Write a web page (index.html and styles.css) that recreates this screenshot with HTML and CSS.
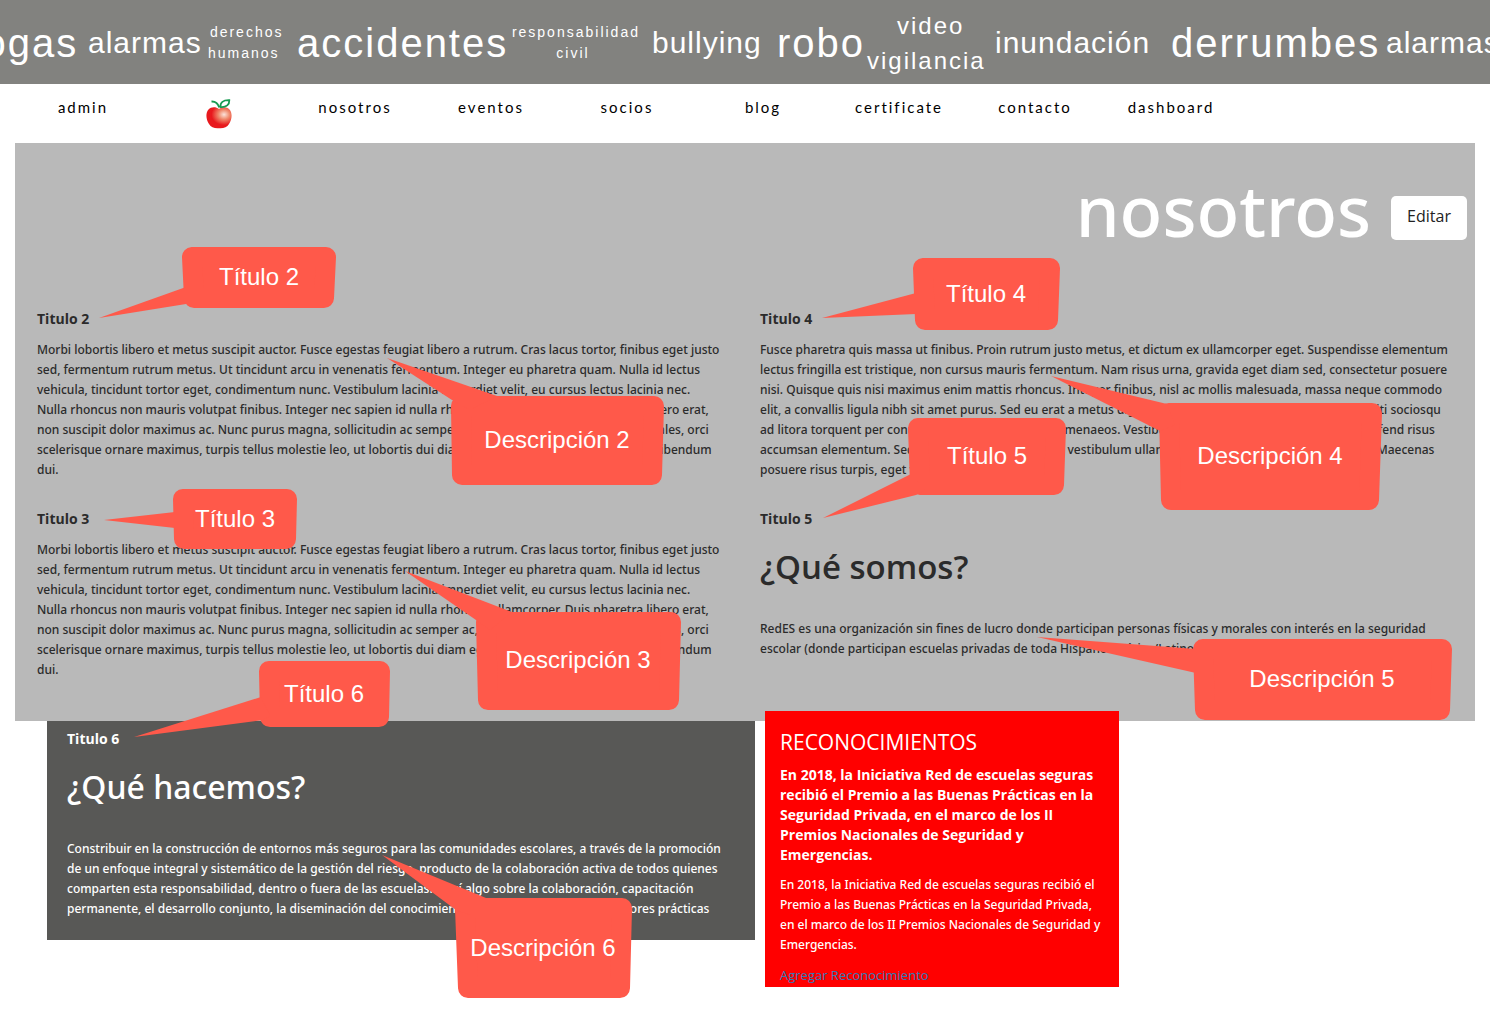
FILE: index.html
```html
<!DOCTYPE html>
<html lang="es">
<head>
<meta charset="utf-8">
<title>nosotros</title>
<meta name="viewport" content="width=device-width, initial-scale=1">
<link rel="stylesheet" href="styles.css">
</head>
<body>
<div class="ticker">
  <span class="word word-lg">drogas</span>
  <span class="word word-md">alarmas</span>
  <span class="word word-sm">&nbsp;derechos<br>humanos</span>
  <span class="word word-lg">accidentes</span>
  <span class="word word-sm">&nbsp;responsabilidad<br>civil</span>
  <span class="word word-md">bullying</span>
  <span class="word word-lg">robo</span>
  <span class="word word-duo">&nbsp;video<br>vigilancia</span>
  <span class="word word-md">inundación</span>
  <span class="word word-lg">derrumbes</span>
  <span class="word word-md">alarmas</span>
</div>

<nav class="nav">
  <a href="#">admin</a>
  <a href="#" aria-label="Inicio">
    <svg class="apple" width="26" height="30" viewBox="0 0 26 30">
      <defs>
        <radialGradient id="skin" cx="0.7" cy="0.35" r="0.5">
          <stop offset="0" stop-color="#fbe3da"/>
          <stop offset="0.45" stop-color="#f08a6c"/>
          <stop offset="1" stop-color="#e8191d"/>
        </radialGradient>
      </defs>
      <path d="M13 10C10 7.500 5 7.500 2.500 10.500C-.5 14-.2 20 3 25C5 28.500 8.500 29.500 13 29.200C17.500 29.500 21 28.500 23 25C26.200 20 26.500 14 23.500 10.500C21 7.500 16 7.500 13 10Z" fill="url(#skin)"/>
      <path d="M5.500 2.500C9.500 2.300 12 4.500 13.200 8.500M14.500 8C14 3.500 17 1 23.300 1.200C23.500 5.500 20.500 8.500 14.500 8Z" fill="none" stroke="#179a50" stroke-width="1.800"/>
    </svg>
  </a>
  <a href="#">nosotros</a>
  <a href="#">eventos</a>
  <a href="#">socios</a>
  <a href="#">blog</a>
  <a href="#">certificate</a>
  <a href="#">contacto</a>
  <a href="#">dashboard</a>
</nav>

<main class="page">
  <section class="about">
    <header class="about-head">
      <h1>nosotros</h1>
      <button type="button" class="edit">Editar</button>
    </header>
    <div class="columns">
      <article class="block">
        <h3>Titulo 2</h3>
        <p>Morbi lobortis libero et metus suscipit auctor. Fusce egestas feugiat libero a rutrum. Cras lacus tortor, finibus eget justo<br>
        sed, fermentum rutrum metus. Ut tincidunt arcu in venenatis fermentum. Integer eu pharetra quam. Nulla id lectus<br>
        vehicula, tincidunt tortor eget, condimentum nunc. Vestibulum lacinia imperdiet velit, eu cursus lectus lacinia nec.<br>
        Nulla rhoncus non mauris volutpat finibus. Integer nec sapien id nulla rhoncus ullamcorper. Duis pharetra libero erat,<br>
        non suscipit dolor maximus ac. Nunc purus magna, sollicitudin ac semper ac, dignissim et nunc. Nunc ut sodales, orci<br>
        scelerisque ornare maximus, turpis tellus molestie leo, ut lobortis dui diam eget tortor. Aenean nec nisi sed bibendum<br>
        dui.</p>
      </article>
      <article class="block">
        <h3>Titulo 4</h3>
        <p>Fusce pharetra quis massa ut finibus. Proin rutrum justo metus, et dictum ex ullamcorper eget. Suspendisse elementum<br>
        lectus fringilla est tristique, non cursus mauris fermentum. Nam risus urna, gravida eget diam sed, consectetur posuere<br>
        nisi. Quisque quis nisi maximus enim mattis rhoncus. Integer finibus, nisl ac mollis malesuada, massa neque commodo<br>
        elit, a convallis ligula nibh sit amet purus. Sed eu erat a metus dignissim tincidunt in ut nisl. Class aptent taciti sociosqu<br>
        ad litora torquent per conubia nostra, per inceptos himenaeos. Vestibulum at purus nec lectus in cursus eleifend risus<br>
        accumsan elementum. Sed congue nisi sit amet justo vestibulum ullamcorper. Duis eget nunc a elit rutrum. Maecenas<br>
        posuere risus turpis, eget volutpat nunc iaculis a.</p>
      </article>
      <article class="block">
        <h3>Titulo 3</h3>
        <p>Morbi lobortis libero et metus suscipit auctor. Fusce egestas feugiat libero a rutrum. Cras lacus tortor, finibus eget justo<br>
        sed, fermentum rutrum metus. Ut tincidunt arcu in venenatis fermentum. Integer eu pharetra quam. Nulla id lectus<br>
        vehicula, tincidunt tortor eget, condimentum nunc. Vestibulum lacinia imperdiet velit, eu cursus lectus lacinia nec.<br>
        Nulla rhoncus non mauris volutpat finibus. Integer nec sapien id nulla rhoncus ullamcorper. Duis pharetra libero erat,<br>
        non suscipit dolor maximus ac. Nunc purus magna, sollicitudin ac semper ac, dignissim et nunc. Nunc ut sodales, orci<br>
        scelerisque ornare maximus, turpis tellus molestie leo, ut lobortis dui diam eget tortor. Aenean nec nisi sed bibendum<br>
        dui.</p>
      </article>
      <article class="block">
        <h3>Titulo 5</h3>
        <h2>¿Qué somos?</h2>
        <p>RedES es una organización sin fines de lucro donde participan personas físicas y morales con interés en la seguridad<br>
        escolar (donde participan escuelas privadas de toda Hispanoamérica/Latinoamérica).</p>
      </article>
    </div>
  </section>

  <div class="lower">
    <section class="work">
      <h3>Titulo 6</h3>
      <h2>¿Qué hacemos?</h2>
      <p>Constribuir en la construcción de entornos más seguros para las comunidades escolares, a través de la promoción<br>
      de un enfoque integral y sistemático de la gestión del riesgo, producto de la colaboración activa de todos quienes<br>
      comparten esta responsabilidad, dentro o fuera de las escuelas. Aquí algo sobre la colaboración, capacitación<br>
      permanente, el desarrollo conjunto, la diseminación del conocimiento y la implantación de las mejores prácticas</p>
    </section>
    <section class="awards">
      <h2>RECONOCIMIENTOS</h2>
      <p class="lead">En 2018, la Iniciativa Red de escuelas seguras<br>recibió el Premio a las Buenas Prácticas en la<br>Seguridad Privada, en el marco de los II<br>Premios Nacionales de Seguridad y<br>Emergencias.</p>
      <p>En 2018, la Iniciativa Red de escuelas seguras recibió el<br>Premio a las Buenas Prácticas en la Seguridad Privada,<br>en el marco de los II Premios Nacionales de Seguridad y<br>Emergencias.</p>
      <a href="#">Agregar Reconocimiento</a>
    </section>
  </div>
</main>

<svg class="notes" width="1490" height="1019" viewBox="0 0 1490 1019">
  <g class="bubble">
    <path d="M192 257H326L324 298H194Z"/>
    <path d="M461 406H654L652 475H462Z"/>
    <path d="M923 268H1050L1048 320H925Z"/>
    <path d="M918 428H1056L1054 485H920Z"/>
    <path d="M1169 413H1372L1369 500H1171Z"/>
    <path d="M1203 649H1442L1440 710H1205Z"/>
    <path d="M183 499H287L286 539H184Z"/>
    <path d="M269 671H380L379 717H270Z"/>
    <path d="M486 622H671L669 700H488Z"/>
    <path d="M465 908H622L620 988H468Z"/>
  </g>
  <g class="tail">
    <path d="M99 318L186 287V304Z"/>
    <path d="M387 358L452 400L470 410L497 396Z"/>
    <path d="M822 318L916 293V314Z"/>
    <path d="M823 518L911 474L925 490L916 495Z"/>
    <path d="M1051 376L1167 404L1175 425L1160 431Z"/>
    <path d="M1037 637L1196 649V673Z"/>
    <path d="M104 520L175 512V528Z"/>
    <path d="M134 737L261 697L270 716L263 720Z"/>
    <path d="M405 571L476 620L490 630L512 612Z"/>
    <path d="M382 855L456 910L470 915L486 898Z"/>
  </g>
  <g class="label">
    <text x="259" y="285">Título 2</text>
    <text x="557" y="448">Descripción 2</text>
    <text x="986" y="302">Título 4</text>
    <text x="987" y="464">Título 5</text>
    <text x="1270" y="464">Descripción 4</text>
    <text x="1322" y="687">Descripción 5</text>
    <text x="235" y="527">Título 3</text>
    <text x="324" y="702">Título 6</text>
    <text x="578" y="668">Descripción 3</text>
    <text x="543" y="956">Descripción 6</text>
  </g>
</svg>
</body>
</html>
```
FILE: styles.css
```css
* { box-sizing: border-box; }

body {
  position: relative;
  margin: 0;
  background: #fff;
  color: #2b2b2b;
  font: 500 12px/20px "Noto Sans", "Open Sans", sans-serif;
}

h1, h2, h3, p { margin: 0; }

/* Scrolling topics */
.ticker {
  display: grid;
  grid-template-columns: 144px 116px 93px 209px 146px 125px 90px 128px 176px 215px 120px;
  align-items: center;
  justify-items: start;
  height: 84px;
  margin-left: -56px;
  padding-top: 2px;
  background: #82827f;
  color: #fff;
  font-family: "Liberation Sans", Arial, sans-serif;
  letter-spacing: 2px;
  text-align: center;
  white-space: nowrap;
  overflow: hidden;
}
.word-lg { font-size: 40px; line-height: 48px; }
.word-md { font-size: 30px; line-height: 36px; letter-spacing: 1px; }
.word-duo { font-size: 24px; line-height: 35px; }
.word-sm { font-size: 14px; line-height: 21px; }

/* Navigation */
.nav {
  display: grid;
  grid-template-columns: repeat(9, 136px);
  height: 59px;
  margin-left: 15px;
  padding-top: 14px;
}
.nav a {
  color: #000;
  font: 15px/18px Lato, "Open Sans", sans-serif;
  letter-spacing: 2px;
  text-align: center;
  text-decoration: none;
}
.apple { display: block; margin: 1px auto 0; }

/* About */
.page { padding: 0 15px 32px; }
.about {
  height: 578px;
  padding: 0 7px;
  background: #b9b9b9;
}
.about-head {
  display: flex;
  justify-content: flex-end;
  align-items: flex-start;
  gap: 20px;
  padding: 27px 1px 59px;
}
h1 {
  color: #fff;
  font: 500 70px/80px "Noto Sans", "Open Sans", sans-serif;
}
.edit {
  width: 76px;
  height: 44px;
  margin-top: 26px;
  padding: 0 0 4px;
  border: 0;
  border-radius: 5px;
  background: #fff;
  color: #222;
  font: 16px/24px "Open Sans", "Noto Sans", sans-serif;
}
.columns {
  display: grid;
  grid-template-columns: 1fr 1fr;
  row-gap: 29px;
}
.block { padding: 0 15px; white-space: nowrap; }
h3 {
  margin-bottom: 11px;
  font: 700 14px/20px "Open Sans", "Noto Sans", sans-serif;
}
h2 {
  margin: 18px 0 32px;
  font: 600 33px/40px "Open Sans", "Noto Sans", sans-serif;
}

/* Lower panels */
.lower {
  display: flex;
  align-items: flex-start;
  gap: 10px;
  padding: 0 12px 0 32px;
  color: #fff;
  white-space: nowrap;
}
.work {
  width: 50%;
  padding: 8px 20px 21px;
  background: #585856;
}
.work h2 { font: 500 32px/40px "Noto Sans", "Open Sans", sans-serif; }
.awards {
  width: 25%;
  margin-top: -10px;
  padding: 18px 15px 2px;
  background: #f00;
}
.awards h2 {
  margin: 0 0 10px;
  font-size: 21px;
  font-weight: 400;
  line-height: 26px;
}
.awards p { margin-bottom: 10px; }
.awards .lead { font: 700 14px/20px "Open Sans", "Noto Sans", sans-serif; }
.awards a {
  display: block;
  color: #337ab7;
  font: 13px/20px "Open Sans", "Noto Sans", sans-serif;
  text-decoration: none;
}

/* Callouts over the page */
.notes { position: absolute; top: 0; left: 0; pointer-events: none; }
.bubble { fill: #ff594a; stroke: #ff594a; stroke-width: 20px; stroke-linejoin: round; }
.tail { fill: #ff594a; }
.label {
  fill: #fff;
  font: 24px "Liberation Sans", Arial, sans-serif;
  text-anchor: middle;
}
```
